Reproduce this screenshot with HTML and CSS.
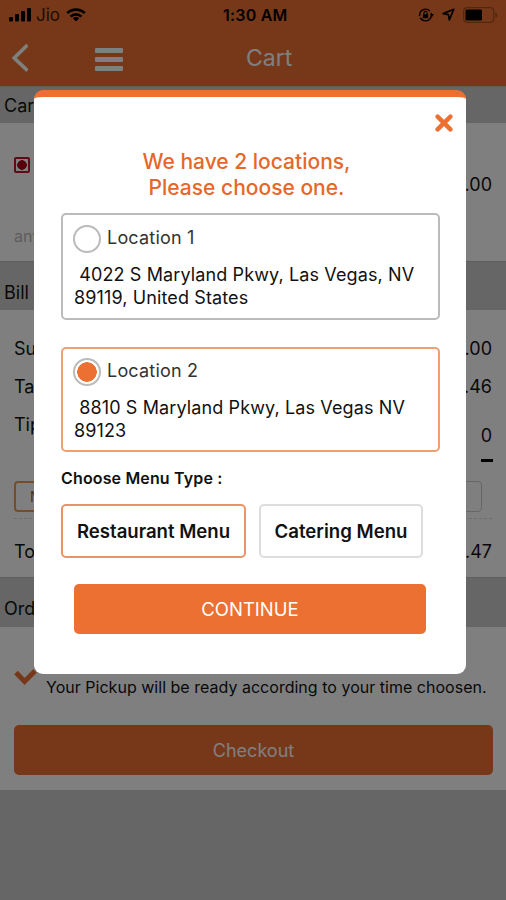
FILE: index.html
```html
<!DOCTYPE html>
<html lang="en">
<head>
    <meta charset="UTF-8">
    <meta name="viewport" content="width=device-width, initial-scale=1.0">
    <title>Cart</title>
    <link rel="stylesheet" href="styles.css">
</head>
<body>
    <div class="page">
        <header>
            <div class="status">
                <svg class="signal" width="23" height="14" viewBox="0 0 23 14">
                    <rect x="0" y="9" width="4" height="4.5" rx="1"/>
                    <rect x="6" y="6" width="4" height="7.5" rx="1"/>
                    <rect x="12" y="3" width="4" height="10.5" rx="1"/>
                    <rect x="18" y="0" width="4" height="13.5" rx="1"/>
                </svg>
                <span class="carrier">Jio</span>
                <svg class="wifi" width="20" height="14" viewBox="0 0 20 14">
                    <path d="M1.2 5.2a12.5 12.5 0 0 1 17.6 0M4.5 8.6a7.8 7.8 0 0 1 11 0" fill="none" stroke="#000" stroke-width="2.6"/>
                    <path d="M6.8 10.3a4.5 4.5 0 0 1 6.4 0L10 13.6z"/>
                </svg>
                <span class="time">1:30 AM</span>
                <svg class="lock" width="16" height="14" viewBox="0 0 16 14">
                    <circle cx="7.5" cy="7" r="5.9" fill="none" stroke="#000" stroke-width="1.4" stroke-dasharray="15 2"/>
                    <path d="M12 6h4l-2 3z"/>
                    <rect x="4.8" y="6.3" width="5.4" height="4" rx=".6"/>
                    <path d="M5.9 6.5V5a1.6 1.6 0 0 1 3.2 0v1.5" fill="none" stroke="#000" stroke-width="1.1"/>
                </svg>
                <svg class="arrow" width="13" height="13" viewBox="0 0 13 13">
                    <path d="M11.8 1.2L1.2 5.6l5.2 1 .9 5.2z" fill="none" stroke="#000" stroke-width="1.7" stroke-linejoin="round"/>
                </svg>
                <svg class="battery" width="34" height="16" viewBox="0 0 34 16">
                    <rect x=".7" y=".7" width="30" height="14.6" rx="3.5" fill="none" stroke="#a0501c" stroke-width="1.2"/>
                    <rect x="2.5" y="2.5" width="16.5" height="11" rx="1.5"/>
                    <path d="M32.3 5.5v5a2.5 2.5 0 0 0 0-5z" fill="#a0501c"/>
                </svg>
            </div>
            <div class="nav">
                <svg class="back" width="18" height="30" viewBox="0 0 18 30">
                    <path d="M17.5 2L4.2 15l13.3 12.6" fill="none" stroke="#fff" stroke-width="3.6"/>
                </svg>
                <div class="burger"><i></i><i></i><i></i></div>
                <h1>Cart</h1>
            </div>
        </header>

        <h2 class="bar bar-first">Cart</h2>
        <section class="item">
            <div class="mark"></div>
            <span class="price">.00</span>
            <span class="note">any</span>
        </section>

        <h2 class="bar">Bill</h2>
        <section class="bill">
            <div class="row"><span>Subtotal</span><span>.00</span></div>
            <div class="row"><span>Tax</span><span>.46</span></div>
            <div class="row tip"><span>Tip</span><span class="tip-value">0</span></div>
            <div class="tips"><span class="tip-option active">No</span><span class="tip-option"></span></div>
            <div class="row total"><span>Total</span><span>.47</span></div>
        </section>

        <h2 class="bar bar-order">Order</h2>
        <section class="order">
            <div class="pickup">
                <svg width="23" height="17" viewBox="0 0 23 17">
                    <path d="M2 3.6l8.6 8.8L21 2" fill="none" stroke="#ec7032" stroke-width="5"/>
                </svg>
                <p>Your Pickup will be ready according to your time choosen.</p>
            </div>
            <button type="button" class="checkout">Checkout</button>
        </section>
    </div>

    <div class="overlay">
        <div class="modal">
            <svg class="close" width="18" height="18" viewBox="0 0 18 18">
                <path d="M2.6 2.6l12.8 12.8M15.4 2.6L2.6 15.4" stroke="#ec7032" stroke-width="4.4" stroke-linecap="round"/>
            </svg>
            <p class="title">We have 2 locations,<br>Please choose one.</p>

            <div class="location">
                <div class="choice"><span class="radio"></span>Location 1</div>
                <p>&nbsp;4022 S Maryland Pkwy, Las Vegas, NV<br>89119, United States</p>
            </div>
            <div class="location selected">
                <div class="choice"><span class="radio"></span>Location 2</div>
                <p>&nbsp;8810 S Maryland Pkwy, Las Vegas NV<br>89123</p>
            </div>

            <p class="label">Choose Menu Type :</p>
            <div class="menus">
                <button type="button" class="menu selected">Restaurant Menu</button>
                <button type="button" class="menu catering">Catering Menu</button>
            </div>
            <button type="button" class="continue">CONTINUE</button>
        </div>
    </div>
</body>
</html>
```
FILE: styles.css
```css
* {
    box-sizing: border-box;
}
body {
    font-family: Inter, "Liberation Sans", sans-serif;
    background-color: #cdcdcd;
    margin: 0;
    color: #111;
    font-size: 18px;
    height: 900px;
    overflow: hidden;
}
p, h1, h2 {
    margin: 0;
    font-weight: normal;
}
button {
    font-family: inherit;
    padding: 0;
    border-radius: 5px;
    white-space: nowrap;
}
span {
    white-space: nowrap;
}
header {
    background-color: #ee7032;
    height: 86px;
}
.status {
    display: flex;
    align-items: center;
    height: 29px;
    padding-left: 9px;
    color: #000;
}
.carrier {
    font-size: 17px;
    margin-left: 4px;
    width: 26px;
    color: #3a1a0a;
}
.wifi {
    margin-left: 4px;
}
.time {
    font-size: 16px;
    font-weight: 600;
    letter-spacing: 0.2px;
    margin-left: 137px;
    width: 66px;
}
.lock {
    margin-left: 129px;
}
.arrow {
    margin-left: 8px;
}
.battery {
    margin-left: 8px;
}
.nav {
    display: flex;
    align-items: center;
    height: 57px;
    padding-left: 10px;
}
.burger {
    display: flex;
    flex-direction: column;
    gap: 4px;
    width: 28px;
    margin: 4px 0 0 67px;
}
.burger i {
    height: 5px;
    border-radius: 1px;
    background-color: #fff;
}
h1 {
    font-size: 23px;
    color: #fff;
    margin-left: 123px;
}
.bar {
    height: 49px;
    padding: 13px 0 0 4px;
    font-size: 18px;
    line-height: 36px;
    border-top: 1px solid #bbb;
}
.bar-first {
    height: 37px;
    padding-top: 1px;
}
.bar-order {
    height: 50px;
}
section {
    background-color: #fff;
}
.item {
    display: grid;
    grid-template-columns: 1fr auto;
    height: 138px;
    padding: 34px 14px 0;
}
.mark {
    width: 16px;
    height: 16px;
    border: 2px solid #c0142c;
    border-radius: 2px;
    background: radial-gradient(circle, #b00018 4.5px, transparent 5px);
}
.price {
    padding-top: 17px;
}
.note {
    color: #bbb;
    font-size: 16px;
    padding-top: 16px;
}
.bill {
    height: 267px;
    padding: 20px 14px 0;
}
.row {
    display: flex;
    justify-content: space-between;
    height: 38px;
    line-height: 38px;
}
.tip {
    height: 75px;
}
.tip-value {
    position: relative;
    align-self: flex-start;
    margin-top: 11px;
}
.tip-value::after {
    content: "";
    position: absolute;
    top: 42px;
    right: -1px;
    width: 12px;
    height: 3px;
    background-color: #000;
}
.tips {
    display: flex;
    justify-content: space-between;
    height: 31px;
    margin-right: 10px;
}
.tip-option {
    width: 100px;
    border: 1px solid #ccc;
    border-radius: 4px;
    padding-left: 14px;
    font-size: 14px;
    line-height: 28px;
}
.tip-option.active {
    border: 2px solid #ee9a50;
    color: #996633;
}
.total {
    border-top: 1px dashed #ddd;
    margin-top: 6px;
    height: 60px;
    line-height: 66px;
}
.order {
    height: 163px;
    padding: 42px 13px 0 14px;
}
.pickup {
    display: flex;
    height: 56px;
}
.pickup p {
    padding: 6px 0 0 9px;
    font-size: 16px;
    line-height: 24px;
    letter-spacing: 0.02px;
    white-space: nowrap;
}
.checkout {
    width: 100%;
    height: 50px;
    border: none;
    background-color: #ee7032;
    color: #fff;
    font-size: 18px;
}

/* location popup */
.overlay {
    position: absolute;
    inset: 0;
    background-color: rgba(0, 0, 0, 0.5);
}
.modal {
    position: relative;
    width: 432px;
    height: 584px;
    margin: 90px 0 0 34px;
    padding: 52px 26px 0 27px;
    border-top: 7px solid #ec7032;
    border-radius: 9px;
    background-color: #fff;
}
.close {
    position: absolute;
    top: 17px;
    right: 13px;
}
.title {
    text-align: center;
    color: #e5682a;
    font-size: 21px;
    font-weight: 450;
    line-height: 26px;
    margin-left: -8px;
    margin-bottom: 12px;
}
.location {
    height: 107px;
    padding: 9px 11px;
    border: 2px solid #bbb;
    border-radius: 5px;
    margin-bottom: 27px;
}
.location.selected {
    border-color: #eda074;
    height: 105px;
    padding-top: 8px;
    margin-bottom: 16px;
}
.location p {
    line-height: 23px;
    margin-top: 9px;
    letter-spacing: 0.12px;
    white-space: nowrap;
}
.choice {
    display: flex;
    height: 30px;
    line-height: 27px;
    letter-spacing: 0.2px;
    color: #333;
}
.radio {
    width: 28px;
    height: 28px;
    margin: 1px 6px 0 -1px;
    border: 2px solid #bbb;
    border-radius: 50%;
}
.selected .radio {
    background: radial-gradient(circle, #ec7032 9.5px, #fff 10px);
}
.label {
    font-size: 16px;
    font-weight: 600;
    line-height: 20px;
    letter-spacing: 0.15px;
}
.menus {
    display: flex;
    gap: 13px;
    margin: 16px 0 26px;
}
.menu {
    width: 185px;
    height: 54px;
    border: 2px solid #ddd;
    background-color: #fff;
    color: #111;
    font-size: 18.6px;
    font-weight: 600;
}
.menu.selected {
    border-color: #e99466;
}
.catering {
    width: 164px;
}
.continue {
    display: block;
    width: 352px;
    height: 50px;
    margin-left: 13px;
    border: none;
    background-color: #ec7032;
    color: #fff;
    font-size: 18.5px;
}
```
